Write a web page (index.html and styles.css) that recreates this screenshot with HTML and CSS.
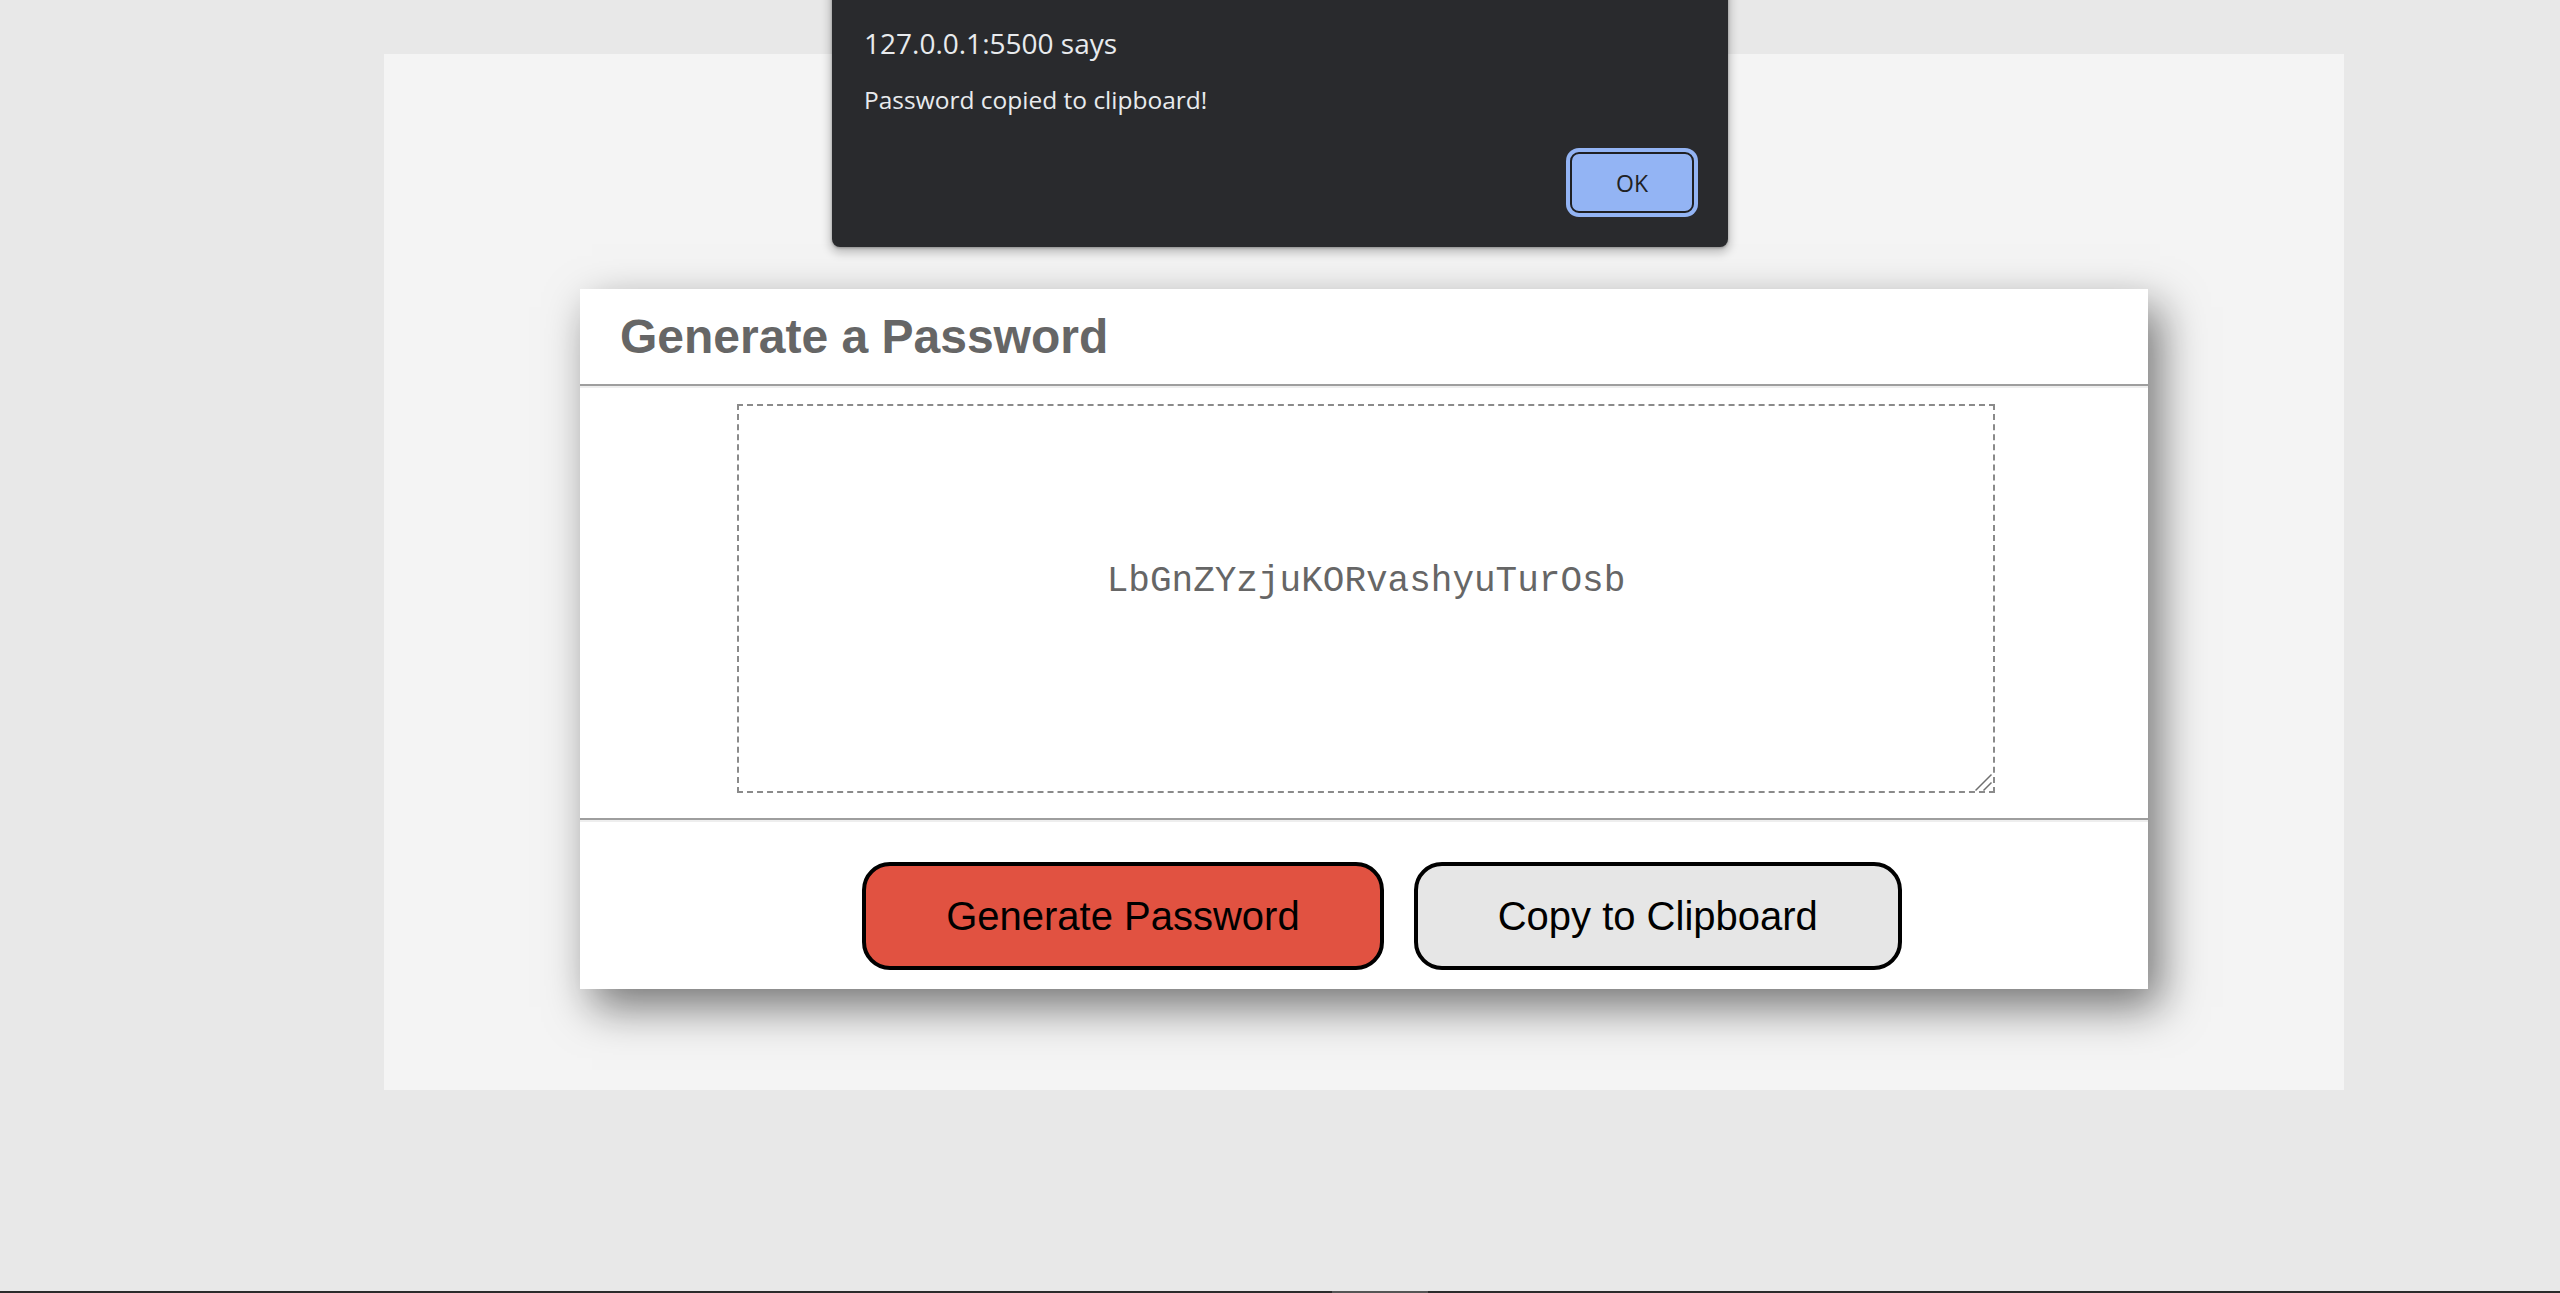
FILE: index.html
```html
<!DOCTYPE html>
<html lang="en">
<head>
<meta charset="utf-8">
<title>Password Generator</title>
<link rel="stylesheet" href="styles.css">
</head>
<body>
<div class="page">
  <main class="wrapper">
    <div class="card">
      <div class="card-header"><h2>Generate a Password</h2></div>
      <div class="rule"></div>
      <div class="card-body">
        <div class="field">
          <textarea readonly class="password" aria-label="Generated Password">LbGnZYzjuKORvashyuTurOsb</textarea>
          <svg class="grip" width="20" height="20" viewBox="0 0 20 20" aria-hidden="true">
            <path d="M0.5 17.5 L16.5 1.5 M8.5 17.5 L16.5 9.5" stroke="#6f6f6f" stroke-width="1.5" fill="none"/>
          </svg>
        </div>
      </div>
      <div class="rule"></div>
      <div class="card-footer">
        <button class="btn btn-generate" type="button">Generate Password</button>
        <button class="btn btn-copy" type="button">Copy to Clipboard</button>
      </div>
    </div>
  </main>
  <div class="taskbar"><span class="taskbar-thumb"></span></div>
</div>
<div class="alert" role="alertdialog">
  <div class="alert-title">127.0.0.1:5500 says</div>
  <div class="alert-message">Password copied to clipboard!</div>
  <div class="alert-actions">
    <button class="alert-ok" type="button">OK</button>
  </div>
</div>
</body>
</html>
```
FILE: styles.css
```css
* {
  box-sizing: border-box;
}

html,
body {
  margin: 0;
  padding: 0;
  height: 100%;
}

body {
  background: #e8e8e8;
  font-family: "Liberation Sans", Arial, sans-serif;
  overflow: hidden;
}

.page {
  height: 100vh;
  display: flex;
  flex-direction: column;
}

.wrapper {
  margin: 54px 0 0 384px;
  width: 1960px;
  height: 1036px;
  background: #f4f4f4;
  padding-top: 235px;
}

.card {
  width: 1568px;
  margin: 0 auto;
  background: #ffffff;
  box-shadow: 12px 18px 42px rgba(0, 0, 0, 0.52);
  display: flex;
  flex-direction: column;
}

.card-header {
  padding: 20px 40px;
}

.card-header h2 {
  margin: 0;
  font-size: 48px;
  line-height: 55px;
  font-weight: 700;
  color: #666666;
}

.rule {
  border-top: 2px solid #9e9e9e;
  border-bottom: 2px solid #eeeeee;
}

.card-body {
  padding: 16px 0 25px 4px;
  display: flex;
  justify-content: center;
}

.field {
  position: relative;
  width: 1258px;
  height: 389px;
}

.password {
  display: block;
  width: 100%;
  height: 100%;
  margin: 0;
  border: 2px dashed #8a8a8a;
  padding: 155px 0 0;
  font-family: "Liberation Mono", "DejaVu Sans Mono", monospace;
  font-size: 36px;
  color: #666666;
  text-align: center;
  background: #ffffff;
  outline: none;
  resize: none;
}

.grip {
  position: absolute;
  right: 0;
  bottom: 0;
}

.card-footer {
  display: flex;
  justify-content: center;
  gap: 30px;
  padding: 40px 0 19px 36px;
}

.btn {
  font-family: "Liberation Sans", Arial, sans-serif;
  font-size: 40px;
  line-height: 46px;
  padding: 27px 80px;
  border: 4px solid #000000;
  border-radius: 28px;
  color: #000000;
  margin: 0;
}

.btn-generate {
  background: #e15241;
}

.btn-copy {
  background: #e6e6e6;
}

.taskbar {
  margin-top: auto;
  height: 2px;
  background: #2b2b2b;
}

.taskbar-thumb {
  display: block;
  margin-left: 1332px;
  width: 96px;
  height: 2px;
  background: #555555;
}

.alert {
  position: absolute;
  top: -20px;
  left: 832px;
  width: 896px;
  background: #292a2d;
  border-radius: 8px;
  box-shadow: 0 4px 10px 2px rgba(0, 0, 0, 0.22), 0 1px 3px rgba(0, 0, 0, 0.3);
  padding: 45px 34px 34px 32px;
  font-family: "Open Sans", "Noto Sans", sans-serif;
  color: #e8eaed;
}

.alert-title {
  font-size: 28px;
  line-height: 36px;
}

.alert-message {
  margin-top: 23px;
  font-size: 24.5px;
  line-height: 32px;
}

.alert-actions {
  margin-top: 36px;
  display: flex;
  justify-content: flex-end;
}

.alert-ok {
  width: 124px;
  height: 61px;
  margin: 0;
  padding: 0;
  background: #93b4f4;
  border: 2px solid #1f2023;
  border-radius: 9px;
  box-shadow: 0 0 0 4px #93b4f4;
  font-family: "Open Sans", "Noto Sans", sans-serif;
  font-size: 23px;
  color: #202124;
}
```
